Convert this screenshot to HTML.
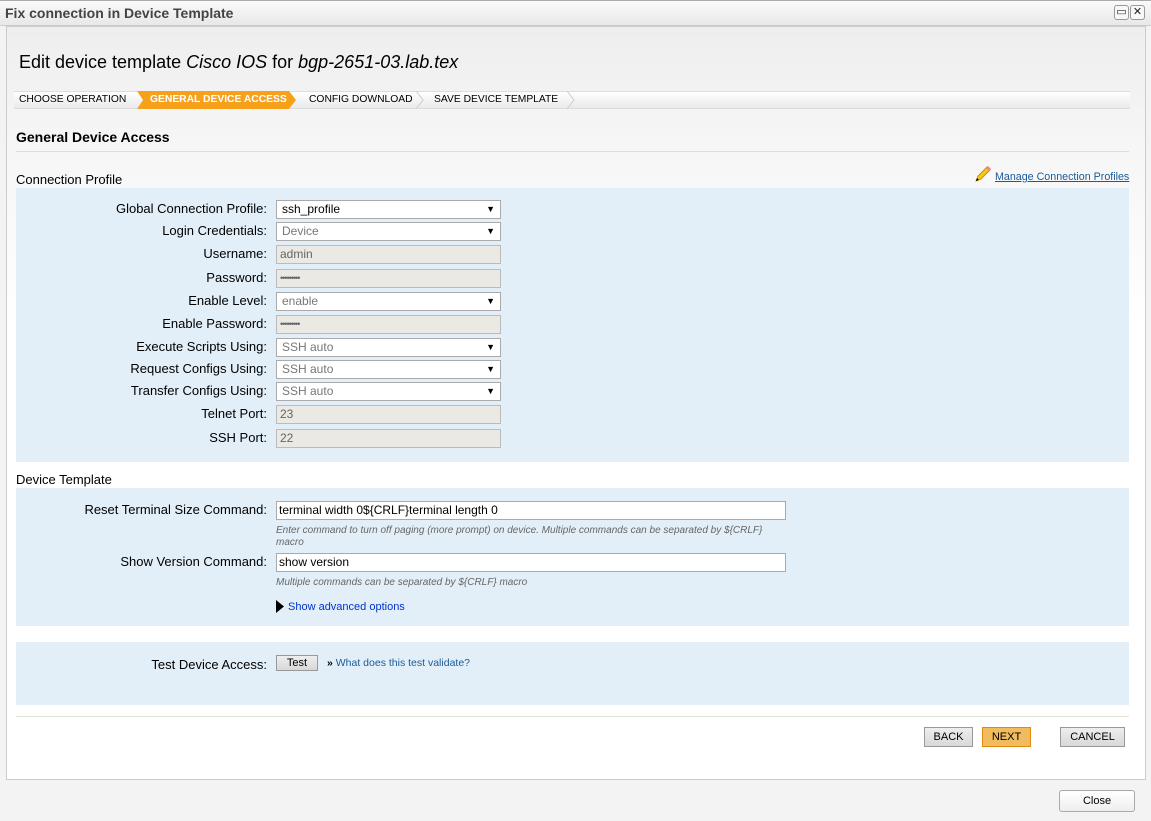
<!DOCTYPE html>
<html><head><style>
*{box-sizing:border-box;margin:0;padding:0}
body{width:1151px;height:821px;position:relative;background:#f3f3f3;font-family:"Liberation Sans",Arial,sans-serif;font-size:12px;color:#000;overflow:hidden}
.a{position:absolute}
.title{left:0;top:0;width:1151px;height:26px;background:linear-gradient(#fafafa,#e8e8e8);border-top:1px solid #aaa;border-bottom:1px solid #ccc}
.title span{position:absolute;left:5px;top:4px;font-weight:bold;font-size:14px;color:#444}
.wb{width:15px;height:15px;border:1px solid #999;border-radius:3px;background:#f8f8f8;top:5px;font-size:11px;text-align:center;line-height:13px;color:#222}
.main{left:6px;top:26px;width:1140px;height:754px;border:1px solid #ccc;background:linear-gradient(#eeeeee 0,#f6f6f6 120px,#fff 300px,#fff)}
.lbl{width:260px;text-align:right;left:7px;font-size:13px}
.sel,.inp,.txt{left:276px;width:225px;height:19px;border:1px solid #aaa;background:#fff;padding-left:5px;line-height:17px;font-size:12px}
.inp{background:#ebe9e3;color:#666;padding-left:3px;border-color:#bbb}
.txt{padding-left:2px}
.sel::after{content:"▼";position:absolute;right:5px;top:0;font-size:9px;color:#000}
.panel{left:16px;width:1113px;background:#e3eff8}
.btn{height:20px;border:1px solid #999;background:linear-gradient(#eee,#d8d8d8);text-align:center;line-height:18px;font-size:11px}
.bc{top:91px;height:18px;font-size:10.3px;line-height:18px}
.pw{font-size:9px;letter-spacing:-1px}
</style></head><body>
<div class="a title"><span>Fix connection in Device Template</span></div>
<div class="a wb" style="left:1114px">▭</div>
<div class="a wb" style="left:1130px">✕</div>
<div class="a main"></div>
<div class="a" style="left:19px;top:52px;font-size:18px">Edit device template <i>Cisco IOS</i> for <i>bgp-2651-03.lab.tex</i></div>
<div class="a" style="left:14px;top:91px;width:1116px;height:18px;background:linear-gradient(#fff,#eaeaea);border-top:1px solid #ddd;border-bottom:1px solid #ddd"></div>
<svg class="a" style="left:14px;top:91px" width="570" height="19">
<polygon points="123,0 275,0 282,9 275,18 123,18 129,9" fill="#f7a11b"/>
<polyline points="402,0 409,9 402,18" fill="none" stroke="#ccc"/>
<polyline points="553,0 560,9 553,18" fill="none" stroke="#ccc"/>
</svg>
<div class="a bc" style="left:19px">CHOOSE OPERATION</div>
<div class="a bc" style="left:150px;color:#fff;font-weight:bold">GENERAL DEVICE ACCESS</div>
<div class="a bc" style="left:309px">CONFIG DOWNLOAD</div>
<div class="a bc" style="left:434px">SAVE DEVICE TEMPLATE</div>
<div class="a" style="left:16px;top:129px;font-size:14px;font-weight:bold">General Device Access</div>
<div class="a" style="left:16px;top:151px;width:1113px;height:1px;background:#ddd"></div>
<div class="a" style="left:16px;top:172px;font-size:13px">Connection Profile</div>
<svg class="a" style="left:974px;top:165px" width="18" height="18"><path d="M2 16 L4 11 L13 2 L16 5 L7 14 Z" fill="#f5c518" stroke="#b8860b" stroke-width=".8"/><path d="M13 2 L16 5" stroke="#e88" stroke-width="3"/><path d="M2 16 L3 13 L5 15Z" fill="#000"/></svg>
<div class="a" style="left:995px;top:171px;font-size:10.7px;color:#1a5a9a;text-decoration:underline">Manage Connection Profiles</div>
<div class="a panel" style="top:188px;height:274px"></div>
<div class="a lbl" style="top:201px">Global Connection Profile:</div><div class="a sel" style="top:200px">ssh_profile</div>
<div class="a lbl" style="top:223px">Login Credentials:</div><div class="a sel" style="top:222px;color:#777">Device</div>
<div class="a lbl" style="top:246px">Username:</div><div class="a inp" style="top:245px">admin</div>
<div class="a lbl" style="top:270px">Password:</div><div class="a inp pw" style="top:269px">•••••••••</div>
<div class="a lbl" style="top:293px">Enable Level:</div><div class="a sel" style="top:292px;color:#777">enable</div>
<div class="a lbl" style="top:316px">Enable Password:</div><div class="a inp pw" style="top:315px">•••••••••</div>
<div class="a lbl" style="top:339px">Execute Scripts Using:</div><div class="a sel" style="top:338px;color:#777">SSH auto</div>
<div class="a lbl" style="top:361px">Request Configs Using:</div><div class="a sel" style="top:360px;color:#777">SSH auto</div>
<div class="a lbl" style="top:383px">Transfer Configs Using:</div><div class="a sel" style="top:382px;color:#777">SSH auto</div>
<div class="a lbl" style="top:406px">Telnet Port:</div><div class="a inp" style="top:405px">23</div>
<div class="a lbl" style="top:430px">SSH Port:</div><div class="a inp" style="top:429px">22</div>
<div class="a" style="left:16px;top:472px;font-size:13px">Device Template</div>
<div class="a panel" style="top:488px;height:138px"></div>
<div class="a lbl" style="top:502px">Reset Terminal Size Command:</div>
<div class="a txt" style="top:501px;width:510px">terminal width 0${CRLF}terminal length 0</div>
<div class="a" style="left:276px;top:525px;font-size:10px;font-style:italic;color:#666;line-height:12px;width:500px">Enter command to turn off paging (more prompt) on device. Multiple commands can be separated by ${CRLF} macro</div>
<div class="a lbl" style="top:554px">Show Version Command:</div>
<div class="a txt" style="top:553px;width:510px">show version</div>
<div class="a" style="left:276px;top:577px;font-size:10px;font-style:italic;color:#666">Multiple commands can be separated by ${CRLF} macro</div>
<svg class="a" style="left:276px;top:600px" width="8" height="13"><polygon points="0,0 8,6.5 0,13" fill="#000"/></svg>
<div class="a" style="left:288px;top:601px;font-size:11px;color:#0033cc">Show advanced options</div>
<div class="a panel" style="top:642px;height:63px"></div>
<div class="a lbl" style="top:657px">Test Device Access:</div>
<div class="a btn" style="left:276px;top:655px;width:42px;height:16px;line-height:14px">Test</div>
<div class="a" style="left:327px;top:657px;font-size:10.5px;color:#1a5a9a"><b style="color:#000">»</b> What does this test validate?</div>
<div class="a" style="left:16px;top:716px;width:1113px;height:1px;background:#e4e2d8"></div>
<div class="a btn" style="left:924px;top:727px;width:49px">BACK</div>
<div class="a btn" style="left:982px;top:727px;width:49px;background:#f0bc5e;border-color:#e08a10">NEXT</div>
<div class="a btn" style="left:1060px;top:727px;width:65px">CANCEL</div>
<div class="a btn" style="left:1059px;top:790px;width:76px;height:22px;line-height:20px;border-radius:3px;background:linear-gradient(#fff,#eee);border-color:#aaa">Close</div>
</body></html>
